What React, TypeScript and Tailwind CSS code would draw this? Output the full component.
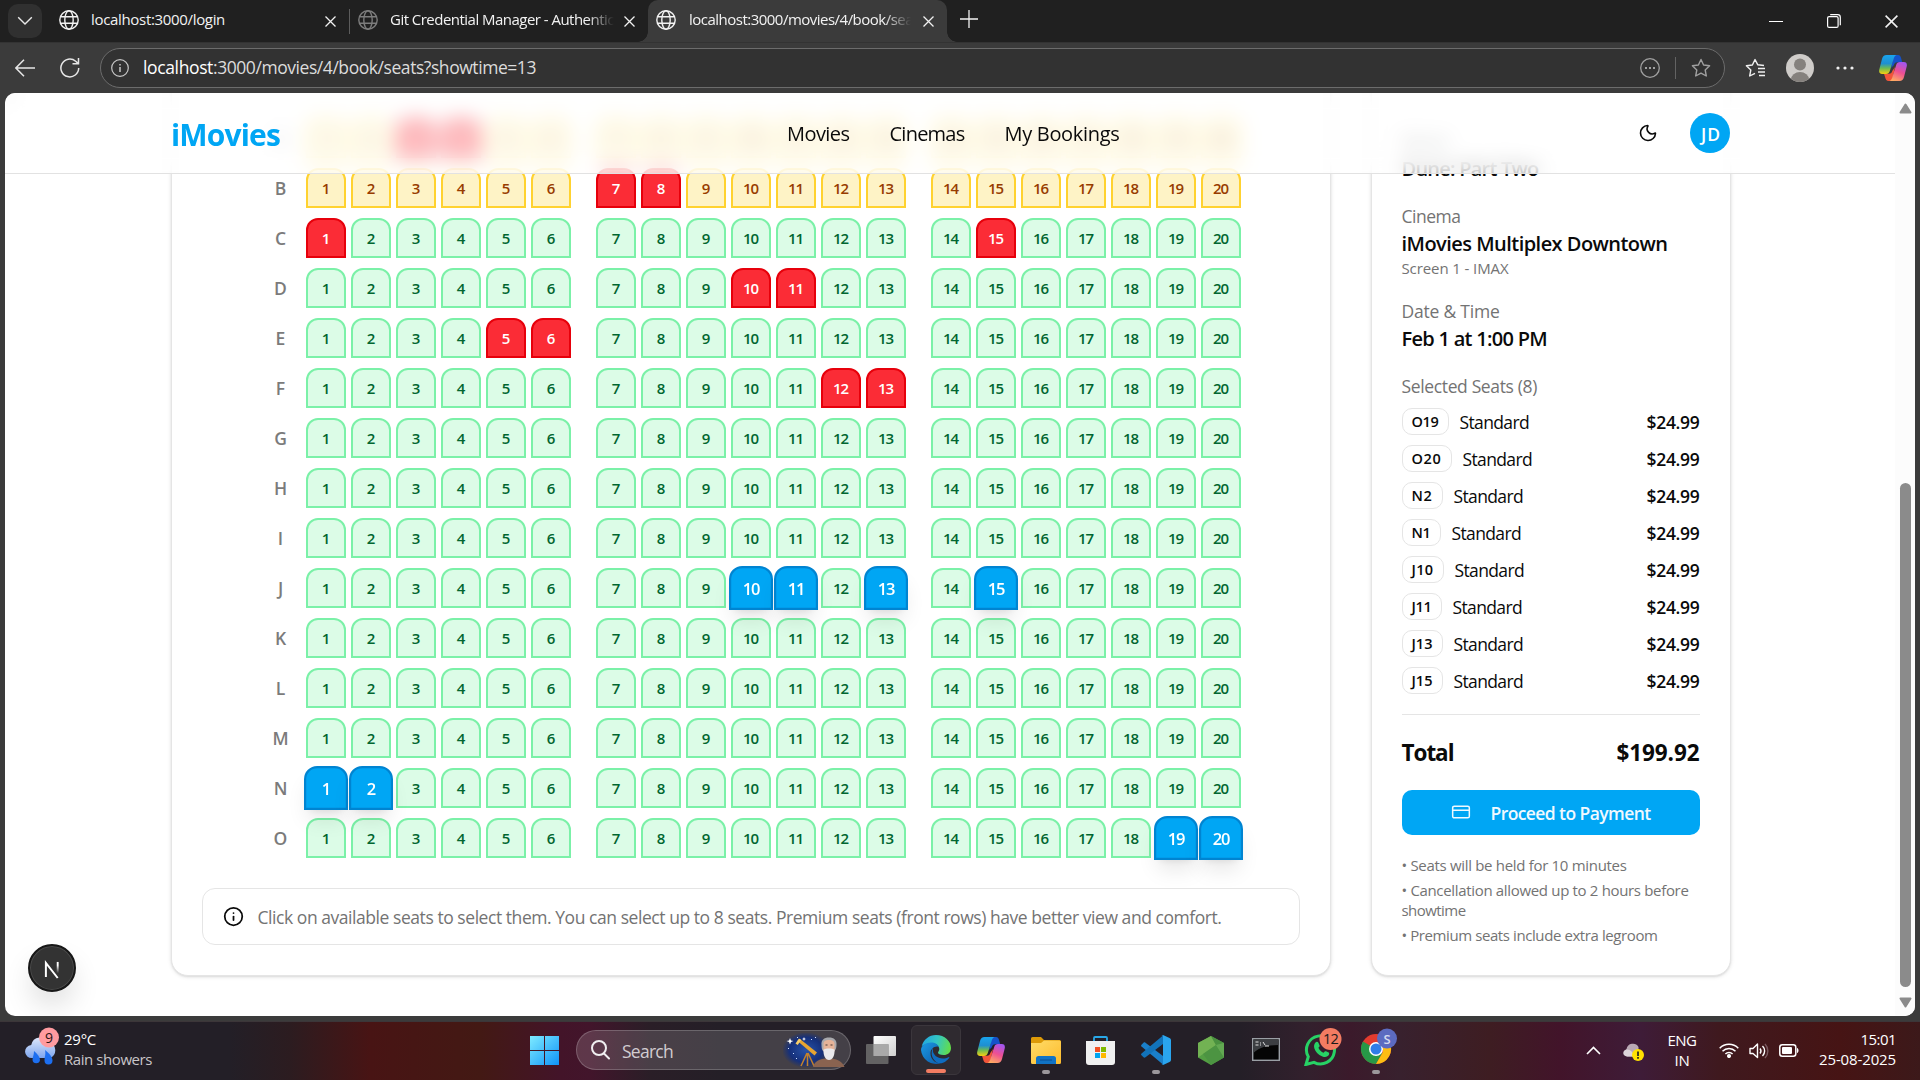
import { useLayoutEffect, useRef, useState, type ReactNode } from "react";
import { CreditCard, Info, Moon } from "lucide-react";

/* Text set to a fixed measure by spreading the difference over its letters. */
function Fit({ w, className = "", children }: { w: number; className?: string; children: string }) {
  const ref = useRef<HTMLSpanElement>(null);
  const [spacing, setSpacing] = useState(0);
  useLayoutEffect(() => {
    const el = ref.current;
    if (el) setSpacing((w - el.getBoundingClientRect().width) / children.length);
  }, [w, children]);
  return (
    <span ref={ref} className={`inline-block whitespace-pre ${className}`} style={{ letterSpacing: `${spacing}px` }}>
      {children}
    </span>
  );
}

/* ---------- Browser chrome ---------- */

function Globe({ color }: { color: string }) {
  return (
    <svg width="20" height="20" viewBox="0 0 20 20" fill="none" stroke={color} strokeWidth="1.4" className="shrink-0">
      <circle cx="10" cy="10" r="9.2" />
      <ellipse cx="10" cy="10" rx="4.2" ry="9.2" />
      <path d="M1.6 6.7h16.8M1.6 13.3h16.8" />
    </svg>
  );
}

function Cross({ size = 11 }: { size?: number }) {
  return (
    <svg width={size} height={size} viewBox="0 0 11 11" fill="none" stroke="#f2f2f2" strokeWidth="1.3" className="shrink-0">
      <path d="M.5.5l10 10M10.5.5l-10 10" />
    </svg>
  );
}

function TabStrip() {
  return (
    <div className="flex h-[42px] items-start bg-[#202020] text-[15px] leading-[20px] text-[#f2f2f2]">
      <div className="ml-2 mt-1 flex h-[34px] w-[34px] items-center justify-center rounded-[10px] bg-[#303030]">
        <svg width="16" height="10" viewBox="0 0 16 10" fill="none" stroke="#e8e8e8" strokeWidth="1.4">
          <path d="M1.2 1.2L8 8l6.800-6.800" />
        </svg>
      </div>
      <div className="ml-[17px] flex h-10 w-[277px] items-center">
        <Globe color="#f2f2f2" />
        <Fit w={134} className="mb-0.5 ml-3">localhost:3000/login</Fit>
        <span className="ml-auto mt-0.5"><Cross /></span>
      </div>
      <div className="ml-[13px] mt-[9px] h-[25px] w-px bg-[#5c5c5c]" />
      <div className="ml-2 flex h-10 w-[277px] items-center">
        <Globe color="#7d7d7d" />
        <div className="mb-0.5 ml-3 w-[224px] overflow-hidden whitespace-nowrap [mask-image:linear-gradient(90deg,#000_88%,transparent)]">
          <Fit w={257}>Git Credential Manager - Authentication</Fit>
        </div>
        <span className="ml-auto mt-0.5"><Cross /></span>
      </div>
      <div className="relative ml-[13px] flex h-[42px] w-[299px] items-start rounded-t-[10px] bg-[#3b3b3b] pl-2 pr-[13px]">
        <div className="absolute -left-[10px] bottom-0 h-[10px] w-[10px] bg-[radial-gradient(circle_at_0_0,transparent_9.500px,#3b3b3b_10px)]" />
        <div className="absolute -right-[10px] bottom-0 h-[10px] w-[10px] bg-[radial-gradient(circle_at_100%_0,transparent_9.500px,#3b3b3b_10px)]" />
        <div className="flex h-10 flex-1 items-center">
          <Globe color="#f2f2f2" />
          <div className="mb-0.5 ml-[13px] w-[222px] overflow-hidden whitespace-nowrap [mask-image:linear-gradient(90deg,#000_88%,transparent)]">
            <Fit w={330}>localhost:3000/movies/4/book/seats?showtime=13</Fit>
          </div>
          <span className="ml-auto mt-0.5"><Cross /></span>
        </div>
      </div>
      <svg width="18" height="18" viewBox="0 0 18 18" fill="none" stroke="#f2f2f2" strokeWidth="1.3" className="ml-[13px] mt-[10px]">
        <path d="M9 0v18M0 9h18" />
      </svg>
      <div className="ml-auto mr-[22px] mt-[14px] flex items-center gap-[44px]">
        <div className="h-px w-[14px] bg-white" />
        <svg width="14" height="14" viewBox="0 0 14 14" fill="none" stroke="#fff" strokeWidth="1.2">
          <rect x=".6" y="2.600" width="10.500" height="10.800" rx="1.500" />
          <path d="M3.200.600h7.500a2.600 2.600 0 0 1 2.600 2.600v8" />
        </svg>
        <Cross size={13} />
      </div>
    </div>
  );
}

const starPath = "M10 1.500l2.600 5.500 6 .8-4.400 4.200 1.100 6L10 15.100l-5.300 2.900 1.100-6L1.400 7.800l6-.8z";

function Toolbar() {
  return (
    <div className="flex h-[51px] items-center border-t border-[#333] bg-[#3b3b3b] text-[17.5px]">
      <svg width="20" height="18" viewBox="0 0 20 18" fill="none" stroke="#e6e6e6" strokeWidth="1.5" className="ml-[15px]">
        <path d="M20 9H1M9 .8L.9 9 9 17.200" />
      </svg>
      <svg width="20" height="20" viewBox="0 0 20 20" fill="none" stroke="#e6e6e6" strokeWidth="1.5" className="ml-[25px]">
        <path d="M18.700 10a8.900 8.900 0 1 1-3-6.700l2.300 2.100M18.500 0v5.700h-6" />
      </svg>
      <div className="ml-5 flex h-10 w-[1625px] items-center rounded-full border border-[#6c6c6c] bg-[#323232] pl-[10px] pr-[13px]">
        <svg width="18" height="18" viewBox="0 0 18 18" fill="none" stroke="#c8c8c8" strokeWidth="1.2">
          <circle cx="9" cy="9" r="8.300" />
          <path d="M9 8v5M9 5v1.500" strokeWidth="1.500" />
        </svg>
        <span className="mb-0.5 ml-[14px] whitespace-nowrap">
          <Fit w={70} className="text-white">localhost</Fit>
          <Fit w={323} className="text-[#dcdcdc]">:3000/movies/4/book/seats?showtime=13</Fit>
        </span>
        <svg width="20" height="20" viewBox="0 0 20 20" fill="none" stroke="#a0a0a0" strokeWidth="1.3" className="ml-auto">
          <circle cx="10" cy="10" r="9.300" />
          <path d="M5 10h2M9 10h2M13 10h2" strokeWidth="2" />
        </svg>
        <div className="ml-[15px] h-[22px] w-px bg-[#636363]" />
        <svg width="20" height="20" viewBox="0 0 20 20" fill="none" stroke="#a0a0a0" strokeWidth="1.400" strokeLinejoin="round" className="ml-[15px]">
          <path d={starPath} />
        </svg>
      </div>
      <svg width="20" height="20" viewBox="0 0 20 20" fill="none" stroke="#f0f0f0" strokeWidth="1.4" strokeLinejoin="round" className="ml-5">
        <path d="M19 7.500l-6.200-.7L10 1.500 7.400 7l-6 .8 4.400 4.200-1.100 6 5.300-2.700M13 10.500h7M13 14h7M14 17.500h6" />
      </svg>
      <svg width="28" height="28" viewBox="0 0 28 28" className="ml-[21px]">
        <clipPath id="avatar"><circle cx="14" cy="14" r="14" /></clipPath>
        <g clipPath="url(#avatar)">
          <rect width="28" height="28" fill="#cfccc9" />
          <circle cx="14" cy="10.500" r="6" fill="#85817d" />
          <ellipse cx="14" cy="25.500" rx="9" ry="7.500" fill="#85817d" />
        </g>
      </svg>
      <svg width="18" height="4" viewBox="0 0 18 4" fill="#f0f0f0" className="ml-[22px]">
        <circle cx="2" cy="2" r="1.600" /><circle cx="9" cy="2" r="1.600" /><circle cx="16" cy="2" r="1.600" />
      </svg>
      <span className="ml-[25px]"><Copilot id="top" /></span>
    </div>
  );
}

function Copilot({ id }: { id: string }) {
  return (
    <svg width="28" height="26" viewBox="0 0 28 26">
      <defs>
        <linearGradient id={`${id}-a`} x1="0" y1="0" x2="0" y2="1">
          <stop offset="0" stopColor="#19a4ee" /><stop offset=".45" stopColor="#1f8fd0" /><stop offset=".7" stopColor="#6dbb52" /><stop offset="1" stopColor="#f4cf12" />
        </linearGradient>
        <linearGradient id={`${id}-b`} x1="0.700" y1="0" x2=".3" y2="1">
          <stop offset="0" stopColor="#a356ee" /><stop offset=".5" stopColor="#ee4f92" /><stop offset="1" stopColor="#ffab63" />
        </linearGradient>
      </defs>
      <path d="M15 0h4c2 0 2.600 1.400 3.200 3.600l1 3.600h-5c-2 0-2.800 1-3.400 3L12 13z" fill="#1552c9" />
      <path d="M13 26H9.500c-2 0-2.800-1.500-3.400-3.700L5 18.700h5c2 0 2.800-1 3.400-3L16 12z" fill="#f2553a" />
      <path d="M7.600 0h10c-1.500.3-2.200 1.600-2.800 3.500l-4 12.500c-.7 2-1.800 2.900-3.800 2.900H3.200C.5 18.900-.3 17 .3 14.600L3 4C3.700 1.500 5 0 7.600 0z" fill={`url(#${id}-a)`} />
      <path d="M20.400 26h-10c1.500-.3 2.200-1.600 2.800-3.500l4-12.500c.7-2 1.800-2.900 3.800-2.900h3.800c2.700 0 3.500 1.900 2.900 4.300L25 22c-.7 2.500-2 4-4.600 4z" fill={`url(#${id}-b)`} />
    </svg>
  );
}

/* ---------- Booking page ---------- */

const ROWS = "ABCDEFGHIJKLMNO".split("");
const BLOCKS = [
  [1, 2, 3, 4, 5, 6],
  [7, 8, 9, 10, 11, 12, 13],
  [14, 15, 16, 17, 18, 19, 20],
];
const BOOKED = new Set(["A3", "A4", "B7", "B8", "C1", "C15", "D10", "D11", "E5", "E6", "F12", "F13"]);
const SELECTED = ["O19", "O20", "N2", "N1", "J10", "J11", "J13", "J15"];
const BADGE_TEXT_WIDTH: Record<string, number> = { O19: 27, O20: 30, N2: 21, N1: 19, J10: 22, J11: 20, J13: 21, J15: 21 };

function seatLook(row: string, n: number) {
  const id = row + n;
  if (BOOKED.has(id)) return "bg-[#fb2c36] border-[#e7000b] text-white font-semibold";
  if (SELECTED.includes(id)) return "bg-[#00a6f4] border-[#0084d1] text-white font-semibold scale-110 shadow-[0_12.5px_19px_-4px_rgba(0,0,0,0.1),0_5px_7.5px_-5px_rgba(0,0,0,0.1)]";
  if (row === "A" || row === "B") return "bg-[#fef3c6] border-[#ffd230] text-[#973c00] font-semibold";
  return "bg-[#dcfce7] border-[#7bf1a8] text-[#016630] font-semibold";
}

function SeatMap() {
  return (
    <div className="flex flex-col gap-[10px]">
      {ROWS.map((row) => (
        <div key={row} className="flex items-center justify-center gap-[5px]">
          <div className="w-10 text-center text-[17.5px] font-semibold text-[#7b7b7b]">{row}</div>
          <div className="flex gap-[25px]">
            {BLOCKS.map((block) => (
              <div key={block[0]} className="flex gap-[5px]">
                {block.map((n) => (
                  <div
                    key={n}
                    className={`flex h-10 w-10 items-center justify-center rounded-t-[12px] border-2 pt-px text-[15px] tracking-[-1px] ${seatLook(row, n)}`}
                  >
                    {n}
                  </div>
                ))}
              </div>
            ))}
          </div>
        </div>
      ))}
    </div>
  );
}

function Field({ label, w, title, tw, children }: { label: string; w: number; title: string; tw: number; children?: ReactNode }) {
  return (
    <div className="flex flex-col items-start">
      <Fit w={w} className="text-[17.5px] leading-[25px] text-[#737373]">{label}</Fit>
      <Fit w={tw} className="text-[20px] font-semibold leading-[30px]">{title}</Fit>
      {children}
    </div>
  );
}

function Summary() {
  return (
    <aside className="-mt-10 flex h-[923px] w-[360px] flex-col gap-5 rounded-[17px] border border-[#e5e5e5] bg-white px-[30px] pt-[75px] shadow-[0_1px_4px_rgba(0,0,0,0.1),0_1px_2px_rgba(0,0,0,0.08)]">
      <Field label="Movie" w={47} title="Dune: Part Two" tw={137} />
      <Field label="Cinema" w={59} title="iMovies Multiplex Downtown" tw={266}>
        <Fit w={107} className="-mt-px mb-px text-[15px] leading-[20px] text-[#737373]">Screen 1 - IMAX</Fit>
      </Field>
      <Field label="Date & Time" w={98} title="Feb 1 at 1:00 PM" tw={145.5} />
      <div className="flex flex-col items-start">
        <Fit w={135.5} className="text-[17.5px] leading-[25px] text-[#737373]">Selected Seats (8)</Fit>
        <div className="mt-[9px] flex flex-col gap-[10px] self-stretch">
          {SELECTED.map((id) => (
            <div key={id} className="flex h-[27px] items-center text-[17.5px]">
              <div className="flex h-[27px] items-center rounded-[10px] border border-[#e5e5e5] px-[9px] text-[14.5px] font-semibold">
                <Fit w={BADGE_TEXT_WIDTH[id]}>{id}</Fit>
              </div>
              <Fit w={69.5} className="ml-[11px] mt-px">Standard</Fit>
              <Fit w={53} className="ml-auto mt-px font-semibold">$24.99</Fit>
            </div>
          ))}
        </div>
      </div>
      <div className="flex justify-between border-t border-[#e5e5e5] pt-5 text-[22.5px] font-bold leading-[35px]">
        <Fit w={52}>Total</Fit>
        <Fit w={83}>$199.92</Fit>
      </div>
      <button className="flex h-[45px] shrink-0 items-center justify-center rounded-[10px] bg-[#00a6f4] text-[17.5px] font-semibold text-[#f0f9ff]">
        <CreditCard size={20} strokeWidth={1.8} className="-mt-[2px] mr-5" />
        <Fit w={160} className="mt-0.5">Proceed to Payment</Fit>
      </button>
      <div className="flex flex-col items-start gap-[5px] text-[15px] leading-[20px] text-[#737373]">
        <Fit w={225}>• Seats will be held for 10 minutes</Fit>
        <div className="flex flex-col items-start">
          <Fit w={287}>• Cancellation allowed up to 2 hours before</Fit>
          <Fit w={64}>showtime</Fit>
        </div>
        <Fit w={256}>• Premium seats include extra legroom</Fit>
      </div>
    </aside>
  );
}

function Header() {
  return (
    <header className="absolute inset-x-0 top-0 z-10 flex h-[81px] items-center border-b border-[#e2e2e2] bg-white/65 pl-[166px] pr-[165px] backdrop-blur-[10px]">
      <Fit w={109} className="mt-0.5 text-[30px] font-bold text-[#00a6f4]">iMovies</Fit>
      <nav className="ml-[507px] flex gap-10 pt-0.5 text-[20px]">
        <Fit w={62.5}>Movies</Fit>
        <Fit w={75}>Cinemas</Fit>
        <Fit w={115}>My Bookings</Fit>
      </nav>
      <Moon size={20} strokeWidth={1.9} className="ml-auto" />
      <div className="ml-8 flex h-10 w-10 items-center justify-center rounded-full bg-[#00a6f4] pl-0.5 pt-0.5 text-[17.5px] font-semibold text-white">
        <Fit w={20}>JD</Fit>
      </div>
    </header>
  );
}

function Page() {
  return (
    <div className="relative mx-[5px] flex h-[923px] overflow-hidden rounded-[10px] bg-white text-[#0a0a0a]">
      <div className="relative w-[1890px]">
        <Header />
        <main className="flex justify-center gap-10 pl-px">
          <section className="-mt-10 flex h-[923px] w-[1160px] flex-col rounded-[17px] border border-[#e5e5e5] bg-white px-[30px] pt-16 shadow-[0_1px_4px_rgba(0,0,0,0.1),0_1px_2px_rgba(0,0,0,0.08)]">
            <SeatMap />
            <div className="mt-[30px] flex h-[57px] shrink-0 items-center rounded-[13px] border border-[#e5e5e5] pl-[20px] text-[17.5px] text-[#737373]">
              <Info size={21} strokeWidth={2} className="text-[#0a0a0a]" />
              <Fit w={964} className="ml-[14px] mt-0.5">
                Click on available seats to select them. You can select up to 8 seats. Premium seats (front rows) have better view and comfort.
              </Fit>
            </div>
          </section>
          <Summary />
        </main>
        <div className="absolute bottom-[24px] left-[23px] flex h-12 w-12 items-center justify-center rounded-full border-2 border-[#171717] bg-[#333] shadow-[0_16px_32px_-8px_rgba(0,0,0,0.24)] ring-1 ring-inset ring-[#4a4a4a]">
          <svg width="17" height="19" viewBox="0 0 18 20" fill="none" strokeWidth="2.100" className="mt-0.5">
            <defs>
              <linearGradient id="n-bar" x1="0" y1="0" x2="0" y2="1"><stop offset=".3" stopColor="#fff" /><stop offset="1" stopColor="#fff" stopOpacity="0" /></linearGradient>
            </defs>
            <path d="M2 18V3l12.500 16" stroke="#fff" />
            <rect x="13.500" y="2" width="2" height="12" fill="url(#n-bar)" />
          </svg>
        </div>
      </div>
      <div className="flex flex-1 flex-col items-center bg-[#fcfcfc]">
        <svg width="13" height="11" viewBox="0 0 13 11" fill="#8b8b8b" stroke="#8b8b8b" strokeWidth="2" strokeLinejoin="round" className="mt-[10px]"><path d="M6.500 1.500L11.500 9.500h-10z" /></svg>
        <div className="mt-[369px] h-[504px] w-[11px] rounded-full bg-[#8b8b8b]" />
        <svg width="13" height="11" viewBox="0 0 13 11" fill="#8b8b8b" stroke="#8b8b8b" strokeWidth="2" strokeLinejoin="round" className="mt-[10px]"><path d="M6.500 9.500L11.500 1.500h-10z" /></svg>
      </div>
    </div>
  );
}

/* ---------- Taskbar ---------- */

function Slot({ children, running = "", active = false }: { children: ReactNode; running?: string; active?: boolean }) {
  return (
    <div className={`relative flex h-[50px] w-[50px] items-center justify-center rounded-[6px] ${active ? "border border-[#3b363c] bg-[#2f2a30]" : ""}`}>
      {children}
      {running && <div className={`absolute bottom-[1px] h-1 rounded-full ${running}`} />}
    </div>
  );
}

function WeatherIcon() {
  return (
    <svg width="35" height="38" viewBox="0 0 35 38">
      <defs>
        <linearGradient id="cloud" x1="0" y1="0" x2="0" y2="1"><stop offset="0" stopColor="#dfe8fb" /><stop offset="1" stopColor="#7ea6ee" /></linearGradient>
      </defs>
      <path d="M7 31a6.500 6.500 0 0 1-.8-13A9.500 9.500 0 0 1 24 15.500a8 8 0 0 1 .5 15.500z" fill="url(#cloud)" />
      <path d="M9 24c3.500 3 6 6 6 9a3.800 3.800 0 0 1-7.500 0c0-3 1.500-5 1.500-9zM20 23c4 3 7.500 7 7.500 10.500a4 4 0 0 1-8 0c0-4 1.500-6 .5-10.500z" fill="#1d6ff0" />
      <circle cx="24" cy="10.500" r="10" fill="#ff9ba0" />
      <text x="24" y="15.500" textAnchor="middle" fontSize="14" fill="#2a1416">9</text>
    </svg>
  );
}

function SearchArt() {
  return (
    <svg width="62" height="34" viewBox="0 0 62 34" className="ml-auto">
      <defs>
        <radialGradient id="sky"><stop offset="0" stopColor="#2752a8" /><stop offset=".7" stopColor="#16307a" /><stop offset="1" stopColor="#16307a" stopOpacity="0" /></radialGradient>
      </defs>
      <ellipse cx="23" cy="17" rx="24" ry="18" fill="url(#sky)" />
      <path d="M7 5l1 2.500L10.500 8 8 9l-1 2.500L6 9 3.500 8 6 7.500zM21 4l.6 1.400L23 6l-1.400.6L21 8l-.6-1.400L19 6l1.400-.6z" fill="#fff" />
      <path d="M14 4h1v1h-1zM28 6h1v1h-1zM5 15h1v1H5zM10 20h1v1h-1zM13 25h1v1h-1zM32 4h1v1h-1z" fill="#cfe0ff" />
      <path d="M14.500 8l2.500-2 17 13.500-2.500 3z" fill="#e7a531" />
      <path d="M12.500 10.500l3.500-5 2.200 1.500-3.500 5z" fill="#f8cf69" />
      <path d="M24 20l-6 13M25 20l6 13M24.500 20v13" stroke="#c4822b" strokeWidth="1.500" />
      <path d="M30 34c1-5 6-8 13-8.500h5c6 .5 12 3.500 13.500 8.500z" fill="#8a6350" />
      <path d="M38.500 12c-.5-5 2.500-7.500 7.500-7.500s8 2.500 7.500 7.500c0 3-1 5-2 6H40c-1-1-1.500-3-1.500-6z" fill="#a9a9ad" />
      <path d="M40.500 11c0-3 2-4 5.500-4s5.500 1 5.500 4v6c0 3-2 4-5.500 4s-5.500-1-5.500-4z" fill="#e6b398" />
      <path d="M40.500 16.500c2.500-1.500 8.500-1.500 11 0 .3 6-1.800 10.500-5.500 10.500s-5.800-4.500-5.500-10.500z" fill="#e9e9ec" />
      <path d="M42.500 12h2M47.500 12h2" stroke="#4a3a34" strokeWidth="1.200" />
    </svg>
  );
}

function Edge() {
  return (
    <svg width="30" height="30" viewBox="0 0 30 30">
      <defs>
        <linearGradient id="edge-top" x1="0" y1=".3" x2="1" y2=".5"><stop offset="0" stopColor="#22a5e0" /><stop offset=".5" stopColor="#33c6c4" /><stop offset="1" stopColor="#62dd4b" /></linearGradient>
        <linearGradient id="edge-left" x1="0" y1="0" x2="1" y2="1"><stop offset="0" stopColor="#1b9ae4" /><stop offset="1" stopColor="#0d59a8" /></linearGradient>
      </defs>
      <path d="M.6 11.500C2.500 4.500 8 0 15 0c8.800 0 15 6.200 15 13 0 4.500-3.300 7-7.300 7-4 0-5.700-1.200-5.700-2.400 0-1 1.300-1.400 1.300-3.600 0-3-3-5.800-7.300-5.800-5 0-9.500 2-10.400 3.300z" fill="url(#edge-top)" />
      <path d="M0 15C0 10.500 4.500 7.500 10 7.500c4 0 7 2 8 4.500-4-1.500-8.500 1.500-8.500 6.500 0 5.500 4.500 10 10.500 9.500A15 15 0 0 1 0 15z" fill="url(#edge-left)" />
      <path d="M12 13c-3 5-1 12 5 15 5 1.500 9-2.500 11.300-5.300.3-.5-.2-.9-.8-.5-1.500.8-3.500 1.300-5.500 1.300-6 0-9.500-4-10-7z" fill="#0f6cc0" />
    </svg>
  );
}

function Taskbar() {
  return (
    <div className="flex h-[59px] items-start border-t border-[#3c3639] bg-[linear-gradient(90deg,#231f27_0px,#231f27_230px,#2c1c20_290px,#481414_370px,#431914_480px,#431429_560px,#42152b_590px,#2a1e27_650px,#241f27_720px,#241f27_1240px,#33202d_1310px,#3b1a2b_1350px,#38212e_1400px,#3e1d22_1490px,#42142a_1560px,#3e1c38_1640px,#3f191e_1720px,#461414_1840px,#3c191a_1920px)] text-[15px] leading-[20px] text-white">
      <div className="ml-[25px] mt-[5px]"><WeatherIcon /></div>
      <div className="ml-[4px] mt-[7px] flex w-[455px] flex-col items-start">
        <Fit w={32} className="leading-[20px]">29°C</Fit>
        <Fit w={88} className="leading-[20px] text-[#c9c5c9]">Rain showers</Fit>
      </div>
      <div className="mt-[3px] flex items-center gap-[5px]">
        <Slot>
          <svg width="29" height="29" viewBox="0 0 29 29">
            <defs><linearGradient id="win" gradientUnits="userSpaceOnUse" x1="0" y1="0" x2="29" y2="29"><stop offset="0" stopColor="#7eebff" /><stop offset="1" stopColor="#0f93f8" /></linearGradient></defs>
            <path d="M0 0h14v14H0zM15 0h14v14H15zM0 15h14v14H0zM15 15h14v14H15z" fill="url(#win)" />
          </svg>
        </Slot>
        <div className="ml-0.5 flex h-10 w-[275px] items-center rounded-full border border-white/20 bg-white/15 pl-[14px] pr-[5px]">
          <svg width="19" height="20" viewBox="0 0 19 20" fill="none" stroke="#f0eef0" strokeWidth="2" strokeLinecap="round"><circle cx="8" cy="8" r="7" /><path d="M13 13.500l5 5" /></svg>
          <Fit w={51} className="ml-3 mt-0.5 text-[17.5px] text-[#d2ccd0]">Search</Fit>
          <SearchArt />
        </div>
        <Slot>
          <svg width="30" height="28" viewBox="0 0 30 28">
            <defs><linearGradient id="tv" x1="0" y1="0" x2="1" y2="1"><stop offset="0" stopColor="#fff" /><stop offset="1" stopColor="#cfcfcf" /></linearGradient></defs>
            <rect x="7.500" width="22.500" height="20" rx="1" fill="url(#tv)" />
            <rect y="8" width="22.500" height="20" rx="1" fill="#6e6e6e" fillOpacity=".85" />
            <path d="M7.500 8h15v12h-15z" fill="#a9a9a9" />
          </svg>
        </Slot>
        <Slot active running="w-5 bg-[#f37c62]"><Edge /></Slot>
        <Slot><Copilot id="bar" /></Slot>
        <Slot running="w-2 bg-[#9b979b]">
          <svg width="30" height="27" viewBox="0 0 30 27">
            <defs><linearGradient id="fold" x1="0" y1="0" x2="1" y2="1"><stop offset="0" stopColor="#ffdc69" /><stop offset="1" stopColor="#fdbb2c" /></linearGradient></defs>
            <path d="M0 1.500A1.500 1.500 0 0 1 1.500 0H10l3 3h15.500A1.500 1.500 0 0 1 30 4.500V12H0z" fill="#dd9a08" />
            <path d="M0 6h10l3-2.500h15.500A1.500 1.500 0 0 1 30 5v20.500a1.500 1.500 0 0 1-1.500 1.500h-27A1.500 1.500 0 0 1 0 25.500z" fill="url(#fold)" />
            <path d="M5 27v-5.500A2.500 2.500 0 0 1 7.500 19h15a2.500 2.500 0 0 1 2.500 2.500V27z" fill="#1173c5" />
            <path d="M9 22.500h12v1H9z" fill="#0b4f92" />
          </svg>
        </Slot>
        <Slot>
          <svg width="29" height="29" viewBox="0 0 29 29" className="-ml-px">
            <path d="M8 6V2a1 1 0 0 1 1-1h11a1 1 0 0 1 1 1v4" fill="none" stroke="#29a8e8" strokeWidth="1.800" />
            <path d="M0 5h29v21a3 3 0 0 1-3 3H3a3 3 0 0 1-3-3z" fill="#f0f0f0" />
            <path d="M9 11h5v5H9z" fill="#f25022" /><path d="M15 11h5v5h-5z" fill="#7fba00" /><path d="M9 17h5v5H9z" fill="#00a4ef" /><path d="M15 17h5v5h-5z" fill="#ffb900" />
          </svg>
        </Slot>
        <Slot running="w-2 bg-[#9b979b]">
          <svg width="30" height="30" viewBox="0 0 30 30">
            <path d="M.5 9.700l2-2c.6-.5 1.300-.5 2 0L22 21v8.600L.5 11.500c-.6-.6-.6-1.200 0-1.800z" fill="#1a7fc9" />
            <path d="M.5 20.300l2 2c.6.500 1.300.5 2 0L22 9V.4L.5 18.500c-.6.600-.6 1.200 0 1.800z" fill="#1273ba" />
            <path d="M22 0l6.500 3A2.300 2.300 0 0 1 30 5v20a2.300 2.300 0 0 1-1.500 2L22 30c-.8.200-1.300 0-1.800-.5.900.8 1.800.2 1.800-1V1.500c0-1.200-1-1.800-1.800-1C20.700 0 21.200-.2 22 0z" fill="#2aa5ee" />
          </svg>
        </Slot>
        <Slot>
          <svg width="26" height="29" viewBox="0 0 26 29">
            <path d="M13 0l13 7v14.500L13 29 0 21.500V7z" fill="#539e43" />
            <path d="M13 0L0 7v14.500L18 9z" fill="#72b253" /><path d="M13 0l13 7-8 2z" fill="#4a9140" /><path d="M18 9l8 12.500L13 29 5 18z" fill="#4c9442" /><path d="M18 9l8-2v14.500z" fill="#62a852" />
          </svg>
        </Slot>
        <Slot>
          <svg width="28" height="23" viewBox="0 0 28 23" className="-mt-px mr-px">
            <rect x=".7" y=".7" width="26.600" height="21.600" fill="#050505" stroke="#9a9fa5" strokeWidth="1.400" />
            <path d="M1.500 1.500h25V7c-12 0-20 3-25 8z" fill="#3c3e42" />
            <path d="M3.500 4h3M3.500 7h3M8 5h1M8 7h1M11 4l2 3M13 8h4" stroke="#e0e0e0" fill="none" />
          </svg>
        </Slot>
        <Slot>
          <svg width="38" height="38" viewBox="0 0 38 38" className="absolute left-[8px] top-[3px]">
            <path d="M2 36.500l2.300-7.700A14 14 0 1 1 10 34.300z" fill="none" stroke="#27d265" strokeWidth="3" />
            <path d="M11.500 14.500c.8-.9 2.400-.9 2.900.2l1.200 2.700c.2.700-.1 1.200-1.200 2.400 1.200 2.400 2.800 4 5.200 5 1.200-1.500 1.700-1.800 2.400-1.500l2.700 1.300c.8.500.6 2-.3 3-1.400 1.500-3.500 1.800-6 .8-4.500-1.800-7-5-8-8-.7-2.300-.3-4.300 1.100-5.900z" fill="#27d265" />
            <circle cx="26.500" cy="11" r="11" fill="#f37c62" />
            <text x="26.500" y="16" textAnchor="middle" fontSize="14.500" letterSpacing="-0.800" fill="#1a1a1a">12</text>
          </svg>
        </Slot>
        <Slot running="w-2 bg-[#9b979b]">
          <svg width="40" height="38" viewBox="0 0 40 38" className="absolute left-[10px] top-[3px]">
            <circle cx="15" cy="21" r="15" fill="#e33b2e" />
            <path d="M2 13.500A15 15 0 0 0 15 36l6.500-11.500L15 21z" fill="#279847" />
            <path d="M28 13.500A15 15 0 0 1 15 36l7-12V13.500z" fill="#fdbd13" />
            <circle cx="15" cy="21" r="7" fill="#fff" /><circle cx="15" cy="21" r="5.500" fill="#2f7de9" />
            <circle cx="26" cy="10.500" r="10" fill="#5c6bc0" />
            <text x="26" y="15.500" textAnchor="middle" fontSize="13" fontWeight="600" fill="#d5d9ef">S</text>
          </svg>
        </Slot>
      </div>
      <div className="ml-auto mr-[24px] flex h-[59px] items-start">
        <svg width="15" height="9" viewBox="0 0 15 9" fill="none" stroke="#fff" strokeWidth="1.600" className="mt-[24px]"><path d="M1 8l6.500-6.500L14 8" /></svg>
        <svg width="21" height="18" viewBox="0 0 21 18" className="ml-[22px] mt-[21px]">
          <path d="M4 13.500A4 4 0 0 1 3.500 6 6.500 6.500 0 0 1 15.500 4v6l-5 3.500z" fill="#b9a9b4" /><path d="M4 13.500C-1 13-1 7 4 6.500c4 0 6 3 7 7z" fill="#ddd5da" />
          <circle cx="15" cy="12" r="6" fill="#ffe100" /><path d="M15 8.500v4.500M15 14v1.700" stroke="#222" strokeWidth="1.700" />
        </svg>
        <div className="ml-[23px] mt-[8px] flex w-[30px] flex-col items-center">
          <Fit w={29} className="leading-[20px]">ENG</Fit>
          <Fit w={15} className="leading-[20px]">IN</Fit>
        </div>
        <svg width="20" height="16" viewBox="0 0 20 16" fill="none" stroke="#fff" strokeWidth="1.500" className="ml-[22px] mt-[20px]">
          <path d="M.7 6.200a13 13 0 0 1 18.600 0M3.500 9.200a9 9 0 0 1 13 0M6.400 12a5 5 0 0 1 7.200 0" /><circle cx="10" cy="14" r="1.300" fill="#fff" />
        </svg>
        <svg width="21" height="18" viewBox="0 0 21 18" fill="none" stroke="#fff" strokeWidth="1.400" strokeLinejoin="round" className="ml-[10px] mt-[20px]">
          <path d="M1 6.500h3L8.500 2v13.500L4 11.500H1zM11 6.500a4 4 0 0 1 0 5M13.500 4a7 7 0 0 1 0 10" /><path d="M16 2a10 10 0 0 1 0 14" stroke="#7b5a60" />
        </svg>
        <svg width="20" height="13" viewBox="0 0 20 13" className="ml-[9px] mt-[22px]">
          <rect x=".8" y=".8" width="16" height="11.400" rx="2.500" fill="none" stroke="#fff" strokeWidth="1.500" /><rect x="3" y="3" width="10" height="7" rx="1" fill="#fff" /><path d="M18 4c2 .5 2 4.500 0 5z" fill="#fff" />
        </svg>
        <div className="ml-[19px] mt-[7px] flex w-[78px] flex-col items-end">
          <Fit w={35.5} className="leading-[20px]">15:01</Fit>
          <Fit w={77} className="leading-[20px]">25-08-2025</Fit>
        </div>
      </div>
    </div>
  );
}

export default function App() {
  return (
    <div className="h-[1080px] w-[1920px] overflow-hidden bg-[#3b3b3b] font-['Open_Sans',sans-serif] [font-stretch:92%]">
      <TabStrip />
      <Toolbar />
      <Page />
      <div className="h-[5px]" />
      <Taskbar />
    </div>
  );
}
